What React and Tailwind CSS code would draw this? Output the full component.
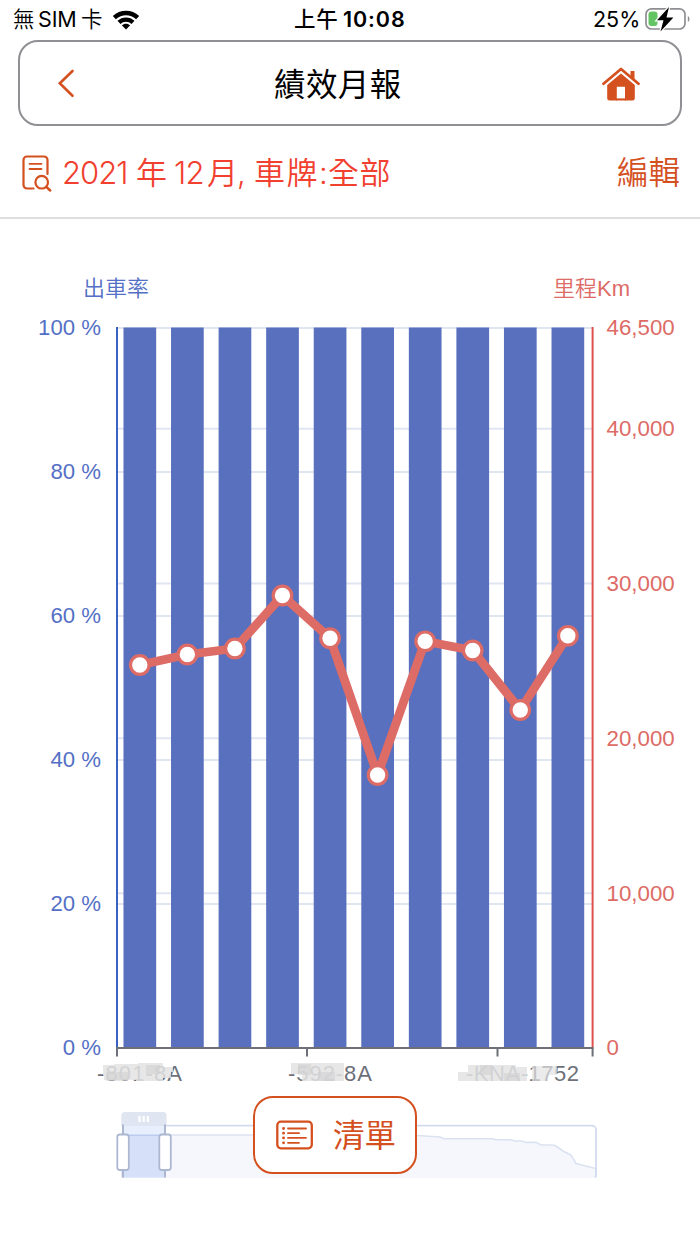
import React from "react";

const CJK = "font-['Inter','Noto_Sans_CJK_TC',sans-serif]";

const LEFT = 117;
const RIGHT = 592.6;
const BASE = 1048;
const STEP = (RIGHT - LEFT) / 10;

const linePoints = [665, 654.5, 648.5, 595.5, 638.2, 775, 641.3, 650.5, 710, 635.8];
const percentTicks = [
  [100, 328], [80, 472], [60, 616], [40, 760], [20, 904], [0, 1048],
];
const kmTicks = [
  ["46,500", 328], ["40,000", 428.7], ["30,000", 583.5], ["20,000", 738.3], ["10,000", 893.2], ["0", 1048],
];

function StatusBar() {
  return (
    <div className={`flex h-10 w-full items-center text-black ${CJK}`}>
      <div className="flex h-full w-[294px] items-center pl-[13px] text-[21.5px] leading-none">
        <span className="w-[25px] font-[350]">無</span>
        <span className="w-[43px] tracking-[-0.1px]">SIM</span>
        <span className="w-[31px] font-[350]">卡</span>
        <svg width="28" height="20" viewBox="0 0 28 20" fill="none">
          <path d="M.8 6C8-.9 20-.9 27.200 6L24.100 9.200C18.400 4 9.600 4 3.900 9.200Z" fill="#000" />
          <path d="M5.500 10.800c4.800-4.500 12.200-4.500 17 0l-3 3.100c-3.200-2.800-7.800-2.800-11 0Z" fill="#000" />
          <path d="M9.800 15.300c2.400-2.200 6-2.200 8.400 0L14 19.400Z" fill="#000" />
        </svg>
      </div>
      <div className="flex h-full w-[299px] items-center text-[21.5px] font-semibold leading-none">
        <span className="w-[49px] font-medium tracking-[0.8px]">上午</span>
        <span className="tracking-[0.9px]">10:08</span>
      </div>
      <span className="w-[52px] text-[21.5px] leading-none">25%</span>
      <svg width="46" height="26" viewBox="0 0 46 26" fill="none">
        <rect x="1" y="1.8" width="39" height="20.2" rx="5.5" stroke="#8e8e93" strokeWidth="1.7" />
        <path d="M42.8 9v6c2.2-1 2.2-5 0-6Z" fill="#8e8e93" />
        <rect x="3.5" y="4.6" width="9" height="14.5" rx="3" fill="#62c462" />
        <path d="M24 0 12 13.2h6.5L15.5 24.5 28.4 10.6h-6.9Z" fill="#000" stroke="#fff" strokeWidth="2.4" paintOrder="stroke" />
      </svg>
    </div>
  );
}

function Header() {
  return (
    <header className="mx-[18px] flex h-[86px] items-center border-2 border-[#8f8f94] rounded-[20px] pl-[37px] pr-[40px]">
      <svg width="20" height="30" viewBox="0 0 20 30" fill="none" stroke="#d4501f" strokeWidth="2.6" strokeLinecap="round">
        <path d="M15.5 3 2.800 15.300l12.700 12.500" />
      </svg>
      <h1 className={`flex-1 pl-[197px] pt-[3px] text-[31.5px] font-normal leading-none tracking-[0.4px] text-black ${CJK}`}>績效月報</h1>
      <svg className="relative top-[1px]" width="38" height="36" viewBox="0 0 38 36" fill="#d4501f">
        <path d="M1.5 17.7 19 3l17.5 14.7" fill="none" stroke="#d4501f" strokeWidth="2.8" strokeLinecap="round" strokeLinejoin="round" />
        <path d="M28.5 5h4v9.2l-4-3.4Z" />
        <path d="M19 7.5 32.8 19v13a2.5 2.5 0 0 1-2.5 2.5H23V20.7h-8.2v13.8H7.7A2.5 2.5 0 0 1 5.2 32V19Z" />
        <path d="M14 32.4h10v2.1H14Z" />
      </svg>
    </header>
  );
}

function FilterRow() {
  return (
    <div className={`flex h-[93px] items-center justify-between border-b-2 border-[#dedede] pl-[22px] pr-[20px] pt-[2px] text-[31px] leading-none ${CJK}`}>
      <div className="flex items-center text-[#f1402f]">
        <svg width="30" height="38" viewBox="0 0 30 38" fill="none" stroke="#d4501f" strokeWidth="2.2" strokeLinecap="round">
          <path d="M11.5 34.5H5a3.5 3.5 0 0 1-3.5-3.5V6A3.5 3.5 0 0 1 5 2.5h17A3.5 3.5 0 0 1 25.5 6v14" />
          <path d="M7.5 9.8h12M7.5 15h12" strokeWidth="1.8" />
          <circle cx="19.7" cy="28.2" r="6.3" />
          <path d="m24.3 32.8 3.9 3.7" strokeWidth="2.5" />
        </svg>
        <div className="flex items-baseline whitespace-nowrap pl-[10px] font-[350]">
          <span className="w-[74px] tracking-[-1px]">2021</span>
          <span className="w-[38px]">年</span>
          <span className="w-[33px] tracking-[-0.8px]">12</span>
          <span className="w-[30px]">月</span>
          <span className="w-[17px]">,</span>
          <span className="w-[65px] tracking-[1.5px]">車牌</span>
          <span className="w-[9px]">:</span>
          <span className="tracking-[0.6px]">全部</span>
        </div>
      </div>
      <button className="text-[31.5px] font-[350] text-[#d4501f]">編輯</button>
    </div>
  );
}

function Chart() {
  const points = linePoints.map((y, i) => [LEFT + STEP * (i + 0.5) - 1, y]);
  return (
    <svg className="block" width="700" height="1024" viewBox="0 220 700 1024" fontFamily="'Liberation Sans','Noto Sans CJK TC',sans-serif" fontSize="22">
      <text x="83" y="296" fill="#5470c6" fontWeight="350">出車率</text>
      <text x="553" y="296" fill="#dd6b66" fontWeight="350">里程Km</text>

      <g stroke="#e0e6f1" strokeWidth="2">
        {percentTicks.slice(0, 5).map(([v, y]) => <path key={v} d={`M${LEFT} ${y}H${RIGHT}`} />)}
        {kmTicks.slice(1, 5).map(([v, y]) => <path key={v} d={`M${LEFT} ${y}H${RIGHT}`} />)}
      </g>
      <path d={`M${LEFT} 327V${BASE}`} stroke="#3a62c4" strokeWidth="2" />
      <path d={`M${RIGHT} 327V${BASE}`} stroke="#de504c" strokeWidth="2" />

      {points.map(([x]) => (
        <rect key={x} x={x - 16.3} y="327.5" width="32.7" height={BASE - 327.5} fill="#5870be" />
      ))}
      <g stroke="#6e7079" strokeWidth="2">
        <path d={`M116 ${BASE}H593.5`} />
        <path d="M117 1048v8.5M307 1048v8.5M497.5 1048v8.5M592.6 1048v8.5" />
      </g>

      <polyline points={points.map((p) => p.join(",")).join(" ")} fill="none" stroke="#dd6b66" strokeWidth="8.8" strokeLinejoin="bevel" />
      {points.map(([x, y]) => (
        <circle key={x} cx={x} cy={y} r="9.3" fill="#fff" stroke="#dd6b66" strokeWidth="3.2" />
      ))}

      <g fill="#5470c6" textAnchor="end">
        {percentTicks.map(([v, y]) => <text key={v} x="101" y={y + 7.3} fontSize="22.2">{v} %</text>)}
      </g>
      <g fill="#dd6b66">
        {kmTicks.map(([v, y]) => <text key={v} x="606.5" y={y + 7.3} fontSize="22.3">{v}</text>)}
      </g>

      <g fill="#6e7079">
        <text x="97" y="1081" textLength="85">-801-8A</text>
        <text x="288" y="1081" textLength="84">-592-8A</text>
        <text x="466" y="1081" textLength="113">-KNA-1752</text>
      </g>
      <g fill="#e3e3e3" fillOpacity="0.85">
        <path d="M103 1065h11v-1h24v-1h25v4h10v5h-2v6h-8v3h-27v-1h-32v-5h-1Z" />
        <path d="M291 1063h53v18h-42v-7h-11Z" />
        <path d="M458 1072h10v-7h48v2h11v14h-69Z" />
        <path d="M532 1066h25v9h-9v6h-16Z" fillOpacity="0.7" />
      </g>
      <g fill="#cfcfd2" fillOpacity="0.55">
        <path d="M106 1072h22v9h-22ZM146 1065h14v9h-14Z" />
        <path d="M298 1064h13v11h-13ZM318 1072h17v9h-17Z" />
        <path d="M480 1065h12v10h-12ZM504 1073h16v8h-16Z" />
      </g>

      <clipPath id="sliderClip"><rect x="110" y="1105" width="500" height="72.5" /></clipPath>
      <g clipPath="url(#sliderClip)">
        <path d="M122 1135H410L440 1137 444 1138.7H492L496 1139.7H511L515 1141H522L526 1142.4H536L541 1145H553L556 1146 563 1151 571 1155 576 1163.5 596 1168.5V1180H122Z" fill="#f5f7fc" stroke="#dbe2f0" strokeWidth="1.6" />
        <rect x="123" y="1125.7" width="473" height="53" rx="4" fill="none" stroke="#d2dbee" strokeWidth="1.8" />
        <rect x="123" y="1126" width="42" height="54" fill="#e7eefc" />
        <rect x="123" y="1135" width="42" height="45" fill="#d6e0f9" />
        <path d="M123 1135.3h42" stroke="#bccbf0" strokeWidth="1.6" />
        <path d="M121.3 1126v-10.5a3.5 3.5 0 0 1 3.5-3.5h38.2a3.5 3.5 0 0 1 3.5 3.5v10.5Z" fill="#dfe5f1" />
        <path d="M139.5 1116v6M143.7 1116v6M147.9 1116v6" stroke="#fff" strokeWidth="2.2" />
        <path d="M123 1124.5v55M165 1124.5v55" stroke="#acb8d1" strokeWidth="2" />
        <rect x="117.3" y="1134.5" width="11.5" height="35.5" rx="2.5" fill="#fff" stroke="#acb8d1" strokeWidth="1.8" />
        <rect x="159.3" y="1134.5" width="11.5" height="35.5" rx="2.5" fill="#fff" stroke="#acb8d1" strokeWidth="1.8" />
      </g>
    </svg>
  );
}

function ListButton() {
  return (
    <button className={`absolute left-[253px] top-[876px] flex h-[78px] w-[164px] items-center rounded-[20px] border-2 border-[#d4501f] bg-white pl-[21px] text-[31.5px] leading-none text-[#d4501f] ${CJK}`}>
      <svg width="38" height="30" viewBox="0 0 38 30" fill="none" stroke="#d4501f" strokeLinecap="round">
        <rect x="1.3" y="1.7" width="34.5" height="26.6" rx="3.5" strokeWidth="2.3" />
        <path d="M12 8.500h18M12 13.200h11M12 17.900h18M12 22.800h11" strokeWidth="1.8" />
        <path d="M7.500 8.500h.1M7.500 13.200h.1M7.500 17.900h.1M7.500 22.800h.1" strokeWidth="2.8" />
      </svg>
      <span className="pl-[19px] pt-[2px]">清單</span>
    </button>
  );
}

export default function App() {
  return (
    <main className="flex h-[1244px] w-[700px] flex-col overflow-hidden bg-white">
      <StatusBar />
      <Header />
      <FilterRow />
      <section className="relative mt-[1px] h-[1024px]">
        <Chart />
        <ListButton />
      </section>
    </main>
  );
}
